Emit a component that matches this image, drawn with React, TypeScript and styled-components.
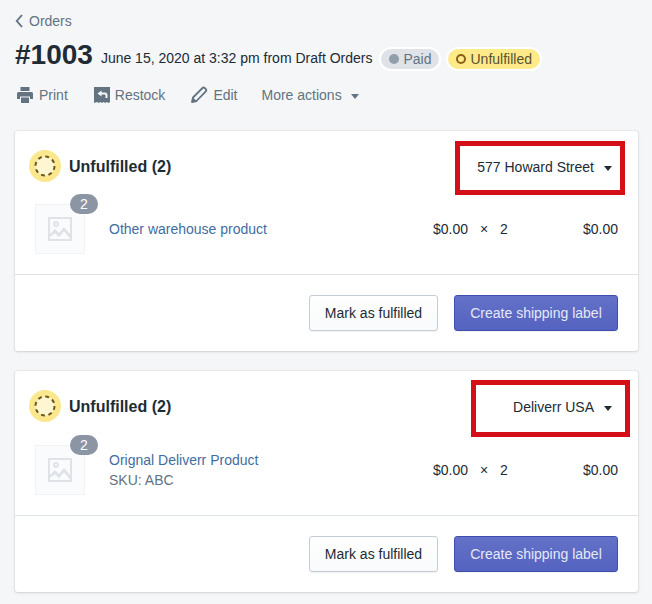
import React from "react";
import styled, { createGlobalStyle } from "styled-components";

const Global = createGlobalStyle`
  html, body { margin: 0; padding: 0; background: #f4f6f8; }
  body { font-family: "Liberation Sans", Arial, sans-serif; font-size: 14px; color: #212b36; }
`;

const Page = styled.div`
  width: 652px;
  height: 604px;
  box-sizing: border-box;
  padding: 13px 14px 0 15px;
  overflow: hidden;
  display: flex;
  flex-direction: column;
`;

const Breadcrumb = styled.div`
  display: flex;
  align-items: center;
  gap: 6px;
  height: 18px;
  color: #637381;
  font-size: 14px;
`;

const TitleRow = styled.div`
  display: flex;
  align-items: center;
  margin-top: 9px;
  height: 34px;
`;

const Title = styled.h1`
  margin: 0 8px 0 0;
  font-size: 28px;
  font-weight: 700;
  line-height: 34px;
  color: #212b36;
`;

const Meta = styled.span`
  font-size: 14px;
  color: #212b36;
  margin-right: 9px;
  position: relative;
  top: 3px;
`;

const Badge = styled.span<{ $tone: "paid" | "open" }>`
  display: inline-flex;
  align-items: center;
  gap: 4px;
  height: 20px;
  padding: 0 8px;
  margin-right: 9px;
  border-radius: 10px;
  font-size: 14px;
  background: ${(p) => (p.$tone === "paid" ? "#dfe3e8" : "#ffea8a")};
  color: ${(p) => (p.$tone === "paid" ? "#637381" : "#595130")};
  box-shadow: 0 0 0 2px #fff;
  position: relative;
  top: 4px;
`;

const Dot = styled.i<{ $tone: "paid" | "open" }>`
  display: block;
  width: 10px;
  height: 10px;
  box-sizing: border-box;
  border-radius: 50%;
  ${(p) => (p.$tone === "paid" ? "background: #919eab;" : "border: 2px solid #8a6116;")}
`;

const Actions = styled.div`
  display: flex;
  align-items: center;
  height: 20px;
  margin-top: 14px;
  margin-left: 1px;
  color: #637381;
`;

const Action = styled.span<{ $gap?: number; $left: number }>`
  display: inline-flex;
  align-items: center;
  gap: ${(p) => p.$gap ?? 5}px;
  margin-left: ${(p) => p.$left}px;
  font-size: 14px;
  color: #637381;
`;

const Card = styled.section`
  position: relative;
  background: #fff;
  border-radius: 3px;
  box-shadow: 0 0 0 1px rgba(63, 63, 68, 0.05), 0 1px 3px 0 rgba(63, 63, 68, 0.15);
  margin-bottom: 20px;
  &:first-of-type { margin-top: 27px; }
`;

const CardHead = styled.header`
  display: flex;
  align-items: center;
  justify-content: space-between;
  padding: 19px 26px 0 14px;
  height: 32px;
`;

const HeadLeft = styled.div`
  display: flex;
  align-items: center;
  gap: 8px;
`;

const StatusRing = styled.span`
  display: flex;
  align-items: center;
  justify-content: center;
  width: 32px;
  height: 32px;
  border-radius: 50%;
  background: #fbe88e;
`;

const CardTitle = styled.h2`
  margin: 2px 0 0;
  font-size: 16px;
  font-weight: 700;
  color: #212b36;
`;

const Location = styled.span`
  display: inline-flex;
  align-items: center;
  gap: 10px;
  margin-top: 2px;
  font-size: 14px;
  color: #212b36;
`;

const Caret = styled.i<{ $color: string }>`
  display: block;
  width: 0;
  height: 0;
  margin-top: 2px;
  border-left: 4.5px solid transparent;
  border-right: 4.5px solid transparent;
  border-top: 5px solid ${(p) => p.$color};
`;

const ItemRow = styled.div<{ $top: number; $bottom: number }>`
  display: flex;
  align-items: center;
  padding: ${(p) => p.$top}px 20px ${(p) => p.$bottom}px 20px;
`;

const Thumb = styled.div`
  position: relative;
  display: flex;
  align-items: center;
  justify-content: center;
  width: 50px;
  height: 50px;
  box-sizing: border-box;
  background: #fafbfc;
  border: 1px solid #f0f2f5;
  flex: none;
`;

const Count = styled.span`
  position: absolute;
  top: -11px;
  right: -14px;
  width: 28px;
  height: 20px;
  border-radius: 10px;
  background: #8c95a3;
  color: #fff;
  font-size: 14px;
  line-height: 20px;
  text-align: center;
`;

const ItemInfo = styled.div`
  flex: 1;
  margin-left: 24px;
  line-height: 20px;
`;

const ItemName = styled.div`
  color: #3f6d9f;
  font-size: 14px;
`;

const Sku = styled.div`
  color: #637381;
  font-size: 14px;
`;

const Price = styled.div`
  display: grid;
  grid-template-columns: 35px 32px 20px 1fr;
  width: 185px;
  color: #212b36;
  font-size: 14px;
  line-height: 20px;
`;

const Times = styled.span`
  text-align: center;
`;

const Qty = styled.span`
  text-align: left;
`;

const Total = styled.span`
  text-align: right;
`;

const Footer = styled.footer`
  display: flex;
  justify-content: flex-end;
  gap: 16px;
  padding: 20px;
  border-top: 1px solid #dfe3e8;
`;

const Secondary = styled.button`
  height: 36px;
  width: 129px;
  padding: 0;
  box-sizing: border-box;
  font: 14px "Liberation Sans", Arial, sans-serif;
  color: #212b36;
  background: linear-gradient(180deg, #fff, #f9fafb);
  border: 1px solid #c4cdd5;
  border-radius: 3px;
  box-shadow: 0 1px 0 0 rgba(22, 29, 37, 0.05);
`;

const Primary = styled.button`
  height: 36px;
  width: 164px;
  padding: 0;
  box-sizing: border-box;
  font: 14px "Liberation Sans", Arial, sans-serif;
  color: #e6e8f7;
  background: linear-gradient(180deg, #6371c7, #5563c1);
  border: 1px solid #3f4eae;
  border-radius: 3px;
  box-shadow: 0 1px 0 0 rgba(22, 29, 37, 0.05);
`;

const RedBox = styled.div<{ $top: number; $left: number; $w: number; $h: number }>`
  position: absolute;
  top: ${(p) => p.$top}px;
  left: ${(p) => p.$left}px;
  width: ${(p) => p.$w}px;
  height: ${(p) => p.$h}px;
  box-sizing: border-box;
  border: 5px solid #d40f17;
  pointer-events: none;
`;

const BackIcon = () => (
  <svg width="8" height="14" viewBox="0 0 8 14" fill="none">
    <path d="M7 1L1.8 7L7 13" stroke="#637381" strokeWidth="1.9" />
  </svg>
);

const PrintIcon = () => (
  <svg width="18" height="18" viewBox="0 0 18 18" fill="#637381">
    <path d="M4.5 1h9v4h-9z" />
    <path d="M2.5 6h13A1.5 1.5 0 0 1 17 7.5V13h-3v-2.5H4V13H1V7.5A1.5 1.5 0 0 1 2.5 6z" />
    <path d="M5 11.5h8V17H5z" />
  </svg>
);

const RestockIcon = () => (
  <svg width="16" height="18" viewBox="0 0 16 18">
    <path fill="#637381" d="M0 1h16v15l-1.6 1-1.6-1-1.6 1-1.6-1-1.6 1-1.6-1-1.6 1-1.6-1L0 17z" />
    <path fill="#f4f6f8" d="M7.5 4.5v2H11c1.6 0 2.5 1.2 2.5 3v2.5h-2V9.7c0-.8-.3-1.2-1-1.2h-3v2L3.5 7.5z" />
  </svg>
);

const EditIcon = () => (
  <svg width="18" height="18" viewBox="0 0 18 18" fill="none">
    <path d="M2 16l1-4.5L12.5 2a1.6 1.6 0 0 1 2.2 0l1.1 1.1a1.6 1.6 0 0 1 0 2.2L6.5 15z" stroke="#637381" strokeWidth="1.8" strokeLinejoin="round" />
    <path d="M2 16l1-4.5 3.5 3.5z" fill="#637381" />
  </svg>
);

const DashedCircle = () => (
  <svg width="24" height="24" viewBox="0 0 24 24" fill="none">
    <circle cx="12" cy="12" r="9.5" fill="#fdf6d0" stroke="#6b5a1e" strokeWidth="2" strokeDasharray="3.9 3.56" />
  </svg>
);

const ImageIcon = () => (
  <svg width="24" height="24" viewBox="0 0 24 24">
    <path fill="#dfe3e8" fillRule="evenodd" d="M0 0h24v24H0zM2 2v15l5-5 4 4 5-6 6 7V2zM2 19.8V22h20v-.4L16 14.2l-5 6-4-4zM8 4a3 3 0 1 1 0 6 3 3 0 0 1 0-6zm0 2a1 1 0 1 0 0 2 1 1 0 0 0 0-2z" />
  </svg>
);

type Shipment = {
  location: string;
  name: string;
  sku?: string;
  top: number;
  bottom: number;
  box: { top: number; left: number; w: number; h: number };
};

const shipments: Shipment[] = [
  { location: "577 Howard Street", name: "Other warehouse product", top: 22, bottom: 20, box: { top: 10, left: 440, w: 170, h: 54 } },
  { location: "Deliverr USA", name: "Orignal Deliverr Product", sku: "SKU: ABC", top: 23, bottom: 20, box: { top: 9, left: 456, w: 159, h: 57 } },
];

export default function App() {
  return (
    <Page>
      <Global />
      <Breadcrumb>
        <BackIcon />
        Orders
      </Breadcrumb>
      <TitleRow>
        <Title>#1003</Title>
        <Meta>June 15, 2020 at 3:32 pm from Draft Orders</Meta>
        <Badge $tone="paid"><Dot $tone="paid" />Paid</Badge>
        <Badge $tone="open"><Dot $tone="open" />Unfulfilled</Badge>
      </TitleRow>
      <Actions>
        <Action $left={0}><PrintIcon />Print</Action>
        <Action $left={26}><RestockIcon />Restock</Action>
        <Action $left={25}><EditIcon />Edit</Action>
        <Action $left={24} $gap={9}>More actions<Caret $color="#637381" /></Action>
      </Actions>
      {shipments.map((s) => (
        <Card key={s.location}>
          <CardHead>
            <HeadLeft>
              <StatusRing><DashedCircle /></StatusRing>
              <CardTitle>Unfulfilled (2)</CardTitle>
            </HeadLeft>
            <Location>{s.location}<Caret $color="#212b36" /></Location>
          </CardHead>
          <ItemRow $top={s.top} $bottom={s.bottom}>
            <Thumb>
              <ImageIcon />
              <Count>2</Count>
            </Thumb>
            <ItemInfo>
              <ItemName>{s.name}</ItemName>
              {s.sku && <Sku>{s.sku}</Sku>}
            </ItemInfo>
            <Price>
              <span>$0.00</span>
              <Times>×</Times>
              <Qty>2</Qty>
              <Total>$0.00</Total>
            </Price>
          </ItemRow>
          <Footer>
            <Secondary>Mark as fulfilled</Secondary>
            <Primary>Create shipping label</Primary>
          </Footer>
          <RedBox $top={s.box.top} $left={s.box.left} $w={s.box.w} $h={s.box.h} />
        </Card>
      ))}
    </Page>
  );
}
